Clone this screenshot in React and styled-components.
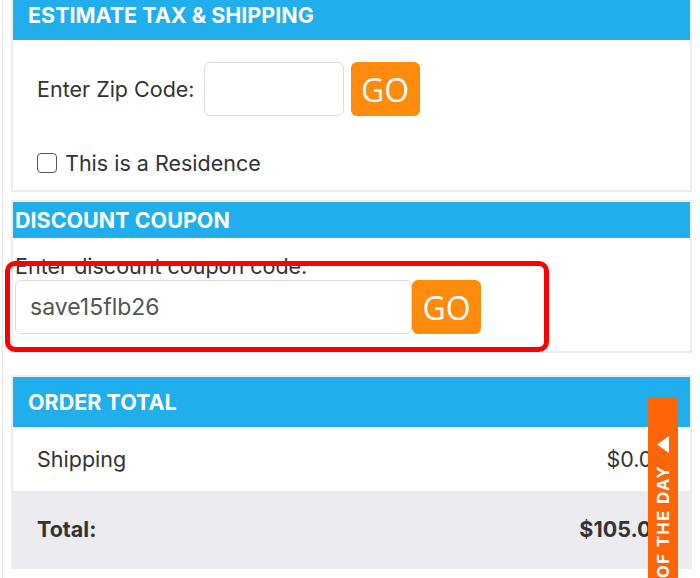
import React from 'react';
import styled, { createGlobalStyle } from 'styled-components';

const GlobalStyle = createGlobalStyle`
  html, body {
    margin: 0;
    padding: 0;
    background: #fff;
    overflow: hidden;
  }
  body {
    font-family: Inter, "Noto Sans", Arial, sans-serif;
    color: #333;
  }
`

const Page = styled.div`
  margin-left: 2px;
  margin-top: -12px;
  width: 695px;
  height: 620px;
  border-left: 1px solid #e6e6e6;
  border-right: 1px solid #e6e6e6;
  padding-left: 8px;
`

const Panel = styled.section`
  position: relative;
  width: 677px;
  border: 2px solid #ededed;
  margin-bottom: ${p => p.gap || 0}px;
  background: #fff;
`

const Header = styled.h2`
  margin: 0;
  height: ${p => p.h || 50}px;
  padding-left: ${p => p.pad || 15}px;
  display: flex;
  align-items: center;
  background: #20aeec;
  color: #fff;
  font-size: 21.5px;
  font-weight: 700;
`

const Body = styled.div`
  padding: ${p => p.padding};
`

const Row = styled.div`
  display: flex;
  align-items: center;
`

const Label = styled.span`
  font-size: 21.5px;
  color: #333;
`

const CouponLabel = styled.div`
  font-size: 21.5px;
  line-height: 24px;
  color: #333;
  margin-bottom: 2px;
`

const TextInput = styled.input`
  box-sizing: border-box;
  width: ${p => p.w}px;
  height: 54px;
  border: 1.5px solid #dcdcdc;
  border-radius: 6px;
  padding: 0 14px;
  font-family: Inter, "Noto Sans", Arial, sans-serif;
  font-size: 23px;
  color: #555;
  outline: none;
  margin-left: ${p => p.ml || 0}px;
`

const GoButton = styled.button`
  width: 69px;
  height: 54px;
  border: none;
  border-radius: 6px;
  background: #ff8a0c;
  color: #fff;
  font-family: "Open Sans", Arial, sans-serif;
  font-size: 32px;
  font-weight: 400;
  padding: 0;
  margin-left: ${p => p.ml || 0}px;
`

const Check = styled.input`
  appearance: none;
  box-sizing: border-box;
  width: 20px;
  height: 20px;
  margin: 0 8px 0 0;
  border: 1.5px solid #555;
  border-radius: 4px;
  background: #fff;
`

const CheckRow = styled.label`
  display: flex;
  align-items: center;
  margin-top: 34px;
  font-size: 21.5px;
  color: #333;
`

const RedMark = styled.div`
  position: absolute;
  left: -8px;
  top: 59px;
  width: 544px;
  height: 91px;
  box-sizing: border-box;
  border: 5px solid #ff0000;
  border-radius: 10px;
  pointer-events: none;
`

const TotalRow = styled.div`
  display: flex;
  justify-content: space-between;
  align-items: center;
  height: ${p => p.h}px;
  padding: 0 24px 0 24px;
  background: ${p => (p.shade ? '#ebebf0' : '#fff')};
  font-size: 21.5px;
  font-weight: ${p => (p.bold ? 700 : 400)};
  color: #333;
`

const DealTab = styled.div`
  position: fixed;
  left: 648px;
  top: 397px;
  width: 30px;
  height: 260px;
  background: #fe6508;
  display: flex;
  flex-direction: column;
  align-items: center;
`

const Arrow = styled.svg`
  width: 12px;
  height: 17px;
  margin-top: 39px;
  margin-left: -1px;
`

const DealText = styled.span`
  writing-mode: vertical-rl;
  transform: rotate(180deg);
  color: #fff;
  font-size: 16.5px;
  font-weight: 700;
  letter-spacing: 1.5px;
  margin-top: 12px;
  white-space: nowrap;
`

export default function App() {
  return (
    <>
      <GlobalStyle />
      <Page>
        <Panel gap={8}>
          <Header>ESTIMATE TAX &amp; SHIPPING</Header>
          <Body padding="22px 24px 14px">
            <Row>
              <Label>Enter Zip Code:</Label>
              <TextInput w={140} ml={9} />
              <GoButton ml={7}>GO</GoButton>
            </Row>
            <CheckRow>
              <Check type="checkbox" />
              This is a Residence
            </CheckRow>
          </Body>
        </Panel>

        <Panel gap={22}>
          <Header h={36} pad={2}>DISCOUNT COUPON</Header>
          <Body padding="16px 2px 17px">
            <CouponLabel>Enter discount coupon code:</CouponLabel>
            <Row>
              <TextInput w={397} defaultValue="save15flb26" />
              <GoButton>GO</GoButton>
            </Row>
          </Body>
          <RedMark />
        </Panel>

        <Panel>
          <Header>ORDER TOTAL</Header>
          <TotalRow h={64}>
            <span>Shipping</span>
            <span>$0.00</span>
          </TotalRow>
          <TotalRow h={76} shade bold>
            <span>Total:</span>
            <span>$105.00</span>
          </TotalRow>
        </Panel>
      </Page>
      <DealTab>
        <Arrow viewBox="0 0 12 17">
          <path d="M0 8.5 L12 0 L12 17 Z" fill="#fff" />
        </Arrow>
        <DealText>DEAL OF THE DAY</DealText>
      </DealTab>
    </>
  )
}
